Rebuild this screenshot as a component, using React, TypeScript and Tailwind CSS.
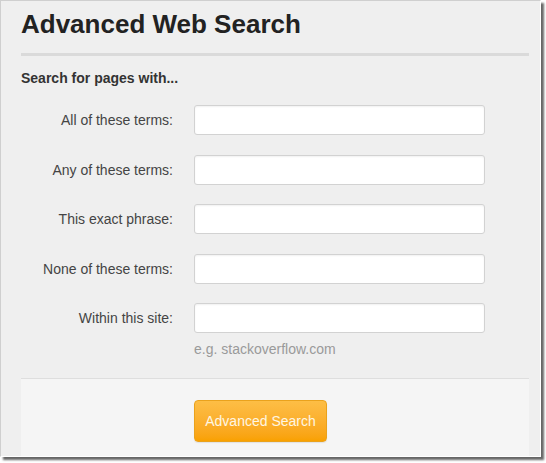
const fields = [
  "All of these terms:",
  "Any of these terms:",
  "This exact phrase:",
  "None of these terms:",
  "Within this site:",
];

const App = () => {
  return (
    <div className="w-[546px] h-[463px] bg-white font-['Liberation_Sans',Arial,sans-serif]">
      <div className="w-[541px] h-[457px] bg-[#efefef] border-l border-t border-[#cfcfcf] border-r border-b border-r-white border-b-white shadow-[3px_3px_2px_rgba(0,0,0,0.6)] flex flex-col overflow-hidden">
        <div className="pl-[20px] pr-[11px] pt-[8px]">
          <h1 className="text-[26px] leading-[30px] font-bold text-[#222]">
            Advanced Web Search
          </h1>
          <div className="mt-[14px] h-[3px] bg-[#dadada]"></div>
          <p className="mt-[12px] text-[14px] leading-[20px] font-bold text-[#333]">
            Search for pages with...
          </p>
          <div className="mt-[17px] grid grid-cols-[152px_291px] gap-x-[21px] gap-y-[19.5px]">
            {fields.map((label) => (
              <div key={label} className="contents">
                <label className="self-center text-right text-[14px] leading-[20px] text-[#444]">
                  {label}
                </label>
                <input
                  type="text"
                  className="h-[30px] bg-white border border-[#d2d2d2] rounded-[3px] shadow-[inset_0_1px_2px_rgba(0,0,0,0.06)] outline-none px-2 text-[14px]"
                />
              </div>
            ))}
          </div>
          <p className="mt-[6px] ml-[173px] text-[14px] leading-[20px] text-[#9a9a9a]">
            e.g. stackoverflow.com
          </p>
        </div>
        <div className="mt-[19px] ml-[20px] mr-[11px] flex-1 bg-[#f5f5f5] border-t border-[#dedede] pt-[21px] pl-[173px]">
          <button className="h-[42px] w-[133px] rounded-[4px] border border-[#eaa21c] bg-gradient-to-b from-[#fdbe45] to-[#f9a100] text-[14px] text-[#fff6e2] shadow-[0_1px_1px_rgba(0,0,0,0.08)]">
            Advanced Search
          </button>
        </div>
      </div>
    </div>
  );
};

export default App;
